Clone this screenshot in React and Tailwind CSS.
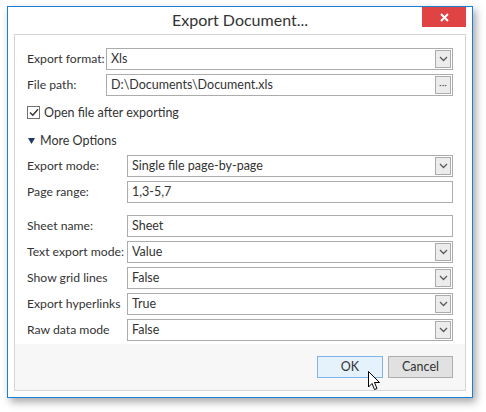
import React from "react";

const font = { fontFamily: 'Lato, "Segoe UI", sans-serif' };

function Chevron() {
  return (
    <svg width="9" height="6" viewBox="0 0 9 6" className="block">
      <path d="M1 1 L4.5 4.5 L8 1" fill="none" stroke="#5a5a5a" strokeWidth="1.3" />
    </svg>
  );
}

function Field({ value, kind }) {
  return (
    <div className="flex h-[22px] flex-1 items-center border border-[#acacac] bg-white py-[1px] pl-[4px] pr-[1px]">
      <span className="flex-1 truncate text-[12.5px] leading-[16px] text-[#333]">{value}</span>
      {kind === "select" && (
        <div className="flex h-full w-[16px] items-center justify-center border border-[#acacac] bg-[#ececec]">
          <Chevron />
        </div>
      )}
      {kind === "dots" && (
        <div className="flex h-full w-[16px] items-center justify-center border border-[#acacac] bg-[#ececec] pb-[3px] text-[10px] leading-none text-[#555]">
          ···
        </div>
      )}
    </div>
  );
}

function Row({ label, value, kind, labelW = "w-[100px]", className = "" }) {
  return (
    <div className={`flex items-center ${className}`}>
      <div className={`${labelW} shrink-0 whitespace-nowrap text-[12.2px] leading-[16px] text-[#333]`}>{label}</div>
      <Field value={value} kind={kind} />
    </div>
  );
}

export default function App() {
  return (
    <div className="h-[412px] w-[486px] bg-white pl-[7px] pt-[6px]" style={font}>
      <div className="relative flex h-[392px] w-[466px] flex-col border border-[#1c7fd6] bg-white shadow-[3px_4px_8px_rgba(0,0,0,0.35)]">
        <div className="relative flex h-[27px] shrink-0 items-center justify-center pb-[1px] text-[16px] leading-[20px] text-[#333]">
          Export Document...
          <div className="absolute right-[6px] top-0 flex h-[20px] w-[44px] items-center justify-center bg-[#e04343]">
            <svg width="9" height="9" viewBox="0 0 9 9">
              <path d="M1 1 L8 8 M8 1 L1 8" stroke="#fff" strokeWidth="2" />
            </svg>
          </div>
        </div>
        <div className="mx-[6px] flex h-[357px] flex-col border border-[#d5d5d5] bg-white">
          <div className="flex flex-col px-[12px] pt-[13px]">
            <Row label="Export format:" value="Xls" kind="select" labelW="w-[79px]" />
            <Row label="File path:" value="D:\Documents\Document.xls" kind="dots" labelW="w-[79px]" className="mt-[4px]" />
            <div className="mt-[10px] flex h-[13px] items-center gap-[4px]">
              <div className="flex h-[13px] w-[13px] items-center justify-center border border-[#707070] bg-white">
                <svg width="10" height="9" viewBox="0 0 10 9">
                  <path d="M1 4.5 L3.8 7.3 L9 1.2" fill="none" stroke="#333" strokeWidth="1.4" />
                </svg>
              </div>
              <span className="whitespace-nowrap text-[12.5px] leading-[16px] text-[#333]">Open file after exporting</span>
            </div>
            <div className="mt-[15px] flex h-[13px] items-center gap-[5px] pl-[1px]">
              <svg width="7" height="6" viewBox="0 0 7 6">
                <path d="M0 0 L7 0 L3.5 6 Z" fill="#1e3a5f" />
              </svg>
              <span className="whitespace-nowrap text-[12.5px] leading-[16px] text-[#333]">More Options</span>
            </div>
            <Row label="Export mode:" value="Single file page-by-page" kind="select" className="mt-[8px]" />
            <Row label="Page range:" value="1,3-5,7" className="mt-[4px]" />
            <Row label="Sheet name:" value="Sheet" className="mt-[12px]" />
            <Row label="Text export mode:" value="Value" kind="select" className="mt-[4px]" />
            <Row label="Show grid lines" value="False" kind="select" className="mt-[4px]" />
            <Row label="Export hyperlinks" value="True" kind="select" className="mt-[4px]" />
            <Row label="Raw data mode" value="False" kind="select" className="mt-[4px]" />
          </div>
          <div className="relative mt-[3px] flex flex-1 items-start justify-end gap-[5px] bg-[#f7f7f7] pr-[12px] pt-[12px]">
            <div className="flex h-[22px] w-[66px] items-center justify-center border border-[#7eb4ea] bg-[#e5f1fb] text-[12.5px] text-[#333]">
              OK
            </div>
            <div className="flex h-[22px] w-[65px] items-center justify-center border border-[#adadad] bg-[#e1e1e1] text-[12.5px] text-[#333]">
              Cancel
            </div>
            <svg className="absolute left-[353px] top-[27px]" width="13" height="20" viewBox="0 0 13 20">
              <path d="M0.5 0.5 L0.5 16 L4 12.5 L6.5 18.5 L9 17.5 L6.5 11.5 L11.5 11.5 Z" fill="#fff" stroke="#000" strokeWidth="1" strokeLinejoin="round" />
            </svg>
          </div>
        </div>
      </div>
    </div>
  );
}
